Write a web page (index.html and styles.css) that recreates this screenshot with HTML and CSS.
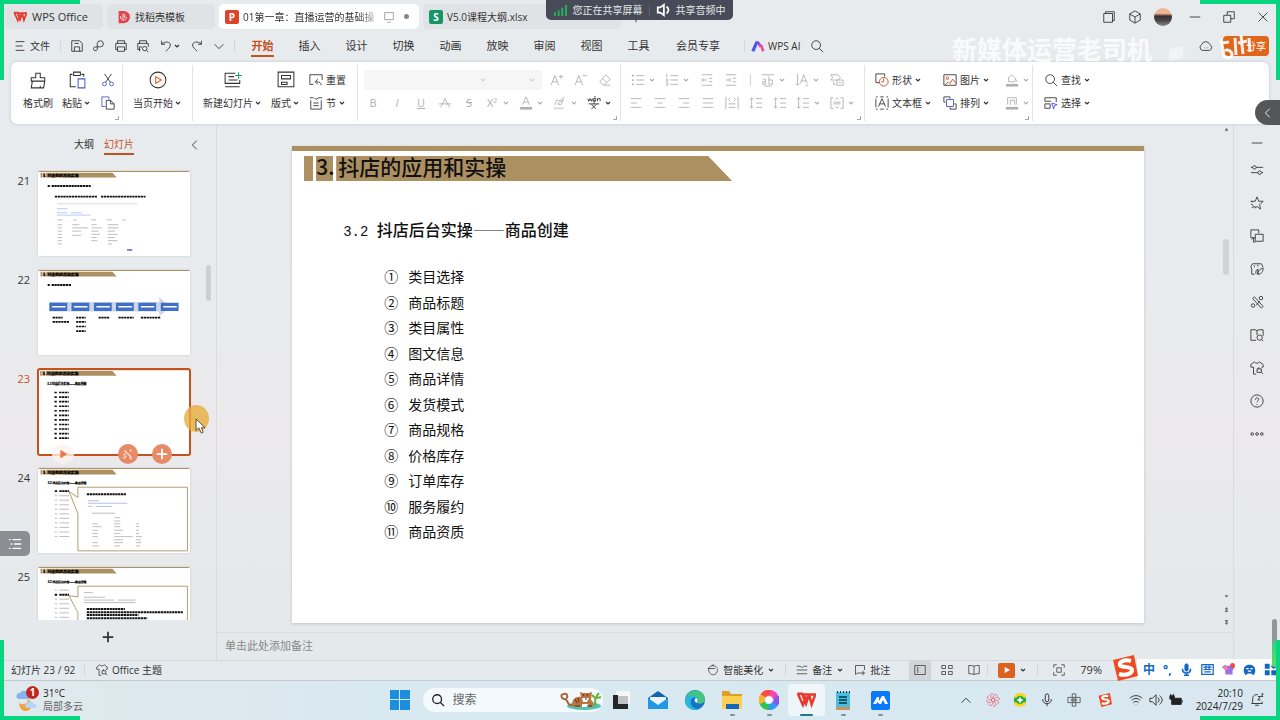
FILE: index.html
```html
<!DOCTYPE html>
<html lang="zh-CN">
<head>
    <meta charset="UTF-8">
    <meta name="viewport" content="width=device-width, initial-scale=1.0">
    <title>WPS Office</title>
    <link rel="stylesheet" href="styles.css">
</head>
<body>
    <svg id="sprite" width="0" height="0">
        <symbol id="caret" viewBox="0 0 8 8"><path d="M2 3l2 2 2-2"/></symbol>
        <symbol id="wps" viewBox="0 0 16 16"><path stroke="#e8392c" stroke-width="2" d="M1 3h4l3 8 2-6M5.500 3.500h5l2 8 3-8h-4M1.500 3l4 9L8 5"/></symbol>
        <symbol id="save" viewBox="0 0 16 16"><path d="M2 2h9l3 3v9H2zM5 14V9h6v5M5 5h5"/></symbol>
        <symbol id="pdf" viewBox="0 0 16 16"><path d="M6 10V5a3.500 3.500 0 1 1 3.500 4H4a2.200 2.200 0 1 0 2 3v-2"/></symbol>
        <symbol id="print" viewBox="0 0 16 16"><path d="M4 5V2h8v3M4 12H2V5h12v7h-2M4 9h8v5H4z"/></symbol>
        <symbol id="preview" viewBox="0 0 16 16"><path d="M4 5V2h8v3M5 12H2V5h12v4M4 14V9h3"/><circle cx="10" cy="11" r="2.500"/><path d="M12 13l2 2"/></symbol>
        <symbol id="undo" viewBox="0 0 16 16"><path d="M3 2v4h4M3 6c4-4 10-3 10 1 0 3-3 4-5 7"/></symbol>
        <symbol id="redo" viewBox="0 0 16 16"><path d="M13 2v4H9M13 6C9 2 3 3 3 7c0 3 3 4 5 7"/></symbol>
        <symbol id="down" viewBox="0 0 16 16"><path d="M3 6l5 5 5-5"/></symbol>
        <symbol id="left" viewBox="0 0 16 16"><path d="M10 3L5 8l5 5"/></symbol>
        <symbol id="up" viewBox="0 0 16 16"><path d="M3 11l5-5 5 5"/></symbol>
        <symbol id="search" viewBox="0 0 16 16"><circle cx="7" cy="7" r="5"/><path d="M10.500 10.500L15 15"/></symbol>
        <symbol id="lines" viewBox="0 0 16 16"><path d="M3 3h10M3 8h8M3 13h10"/></symbol>
        <symbol id="brush" viewBox="0 0 16 16"><path d="M6 6V2h4v4h4v3H2V6zM3 9l-1 6h11l1-6M10 15v-2"/></symbol>
        <symbol id="paste" viewBox="0 0 16 16"><path d="M7 14H2V3h2M12 3h2v2M5 1h6v3H5z"/><path stroke="#4b58c9" d="M9 7h6v8H9z"/></symbol>
        <symbol id="cut" viewBox="0 0 16 16"><path d="M4 1l7 10M12 1L5 11"/><g stroke="#4b58c9"><circle cx="4" cy="12.500" r="2.200"/><circle cx="12" cy="12.500" r="2.200"/></g></symbol>
        <symbol id="copy" viewBox="0 0 16 16"><path stroke="#4b58c9" d="M5 12H1V1h8v3"/><path d="M6 5h5l4 4v6H6zM11 5v4h4"/></symbol>
        <symbol id="playc" viewBox="0 0 16 16"><circle cx="8" cy="8" r="7"/><path stroke="#d2571e" d="M6 5l5 3-5 3z"/></symbol>
        <symbol id="newslide" viewBox="0 0 16 16"><path d="M10 2H1v9h13V8M4 5h5M4 8h8M1 14h13"/><path stroke="#1b9a63" d="M13 1v6M10 4h6"/></symbol>
        <symbol id="layout" viewBox="0 0 16 16"><path d="M1 1h14v13H1zM4 4h8v3H4zM4 10h5v2H4z"/></symbol>
        <symbol id="reset" viewBox="0 0 16 16"><path d="M5 13H1V2h14v6M14 14c0-3-2-4-6-4M10 7l-3 3 3 3"/></symbol>
        <symbol id="section" viewBox="0 0 16 16"><path d="M1 2h4M11 2h4M6 2l2 2 3-2M2 5v10h12V5M5 8h6M5 11h6"/></symbol>
        <symbol id="aplus" viewBox="0 0 16 16"><path d="M1 14L5.500 3 10 14M3 10h5M10 4h5M12.500 2v5"/></symbol>
        <symbol id="aminus" viewBox="0 0 16 16"><path d="M1 14L5.500 3 10 14M3 10h5M10 3h5"/></symbol>
        <symbol id="eraser" viewBox="0 0 16 16"><path d="M9 2l5 5-6 6H5L2 10zM5 6l5 5M7 14h7"/></symbol>
        <symbol id="strike" viewBox="0 0 16 16"><path d="M3 13L8 3l5 10M1 9h14"/></symbol>
        <symbol id="fontcolor" viewBox="0 0 16 16"><path d="M4 10L8 1l4 9M5.500 7h5"/><path stroke-width="3" d="M1 14h14"/></symbol>
        <symbol id="hilite" viewBox="0 0 16 16"><path d="M2 10l2-5h4l5-4M5 9l7-5-3 6z"/><path stroke-width="2.500" stroke="#ddd" d="M1 14h11"/></symbol>
        <symbol id="wen" viewBox="0 0 16 16"><path d="M1 3l1 3 1.500-3L5 6l1-3M7 5h3V3H7v3h3M12 6V3h3v3M8 1h2M2 9h12M8 7v2M5 9l5 6M11 9l-6 6"/></symbol>
        <symbol id="bullets" viewBox="0 0 16 16"><path d="M6 3h9M6 8h9M6 13h9"/><path stroke-width="2" d="M1 3h2M1 8h2M1 13h2"/></symbol>
        <symbol id="numbers" viewBox="0 0 16 16"><path d="M6 3h9M6 8h9M6 13h9M2 1v4M1 7h2v2H1M1 11h2v3H1"/></symbol>
        <symbol id="outdent" viewBox="0 0 16 16"><path d="M2 2h12M10 6h4M10 10h4M2 14h12M8 8H2M4 6L2 8l2 2"/></symbol>
        <symbol id="indent" viewBox="0 0 16 16"><path d="M2 2h12M10 6h4M10 10h4M2 14h12M2 8h6M6 6l2 2-2 2"/></symbol>
        <symbol id="abc" viewBox="0 0 16 16"><path d="M1 2h14M2 7h3v6H2v-3h3M9 4v9h4V8H9M4 15h8"/></symbol>
        <symbol id="vert" viewBox="0 0 16 16"><path d="M3 1v13M1 12l2 2 2-2M6 12l4-10 4 10M7 9h6M12 14h3"/></symbol>
        <symbol id="convert" viewBox="0 0 16 16"><path d="M1 2h8l3 3-3 3H1l2-3zM4 10v3h3M8 8h7v6H8zM10 11h3"/></symbol>
        <symbol id="al" viewBox="0 0 16 16"><path d="M2 3h12M2 8h7M2 13h12"/></symbol>
        <symbol id="ac" viewBox="0 0 16 16"><path d="M2 3h12M5 8h6M2 13h12"/></symbol>
        <symbol id="ar" viewBox="0 0 16 16"><path d="M2 3h12M7 8h7M2 13h12"/></symbol>
        <symbol id="aj" viewBox="0 0 16 16"><path d="M2 3h12M2 8h12M2 13h12"/></symbol>
        <symbol id="dist" viewBox="0 0 16 16"><path d="M1 1v14M15 1v14M4 9h8M4 13h8M6 2L4 4l2 2M10 2l2 2-2 2"/></symbol>
        <symbol id="space" viewBox="0 0 16 16"><path d="M8 3h7M8 8h7M8 13h7M3 2v12M1 4l2-2 2 2M1 12l2 2 2-2"/></symbol>
        <symbol id="vmid" viewBox="0 0 16 16"><path d="M4 2H1v12h3M12 2h3v12h-3M4 7h8M4 9h8M6 4l2-2 2 2M6 12l2 2 2-2"/></symbol>
        <symbol id="shapes" viewBox="0 0 16 16"><path d="M5 11H1V1h10v3"/><g stroke="#c04a28"><circle cx="10" cy="10" r="5"/><path d="M10 6v4H7"/></g></symbol>
        <symbol id="textbox" viewBox="0 0 16 16"><path d="M1 3v10M15 3v10M1 1h2M13 1h2M1 15h2M13 15h2M6 1h4M6 15h4M4 12L8 3l4 9M5 9h6"/></symbol>
        <symbol id="image" viewBox="0 0 16 16"><path d="M1 2h14v12H1z"/><g stroke="#c04a28"><circle cx="5" cy="6" r="1.500"/><path d="M2 14l4-4 2 2 3-5 4 5"/></g></symbol>
        <symbol id="arrange" viewBox="0 0 16 16"><path d="M3 7H1V1h7v2M13 9h2v6H8v-2"/><path stroke="#3f51d6" d="M4 4h8v8H4z"/></symbol>
        <symbol id="fill" viewBox="0 0 16 16"><path d="M4 9V5l4-3 4 4-1 4H4zM12 7l2 3"/><path stroke-width="3" d="M1 14h14"/></symbol>
        <symbol id="frame" viewBox="0 0 16 16"><path d="M3 10V2h10v8M6 10V5h5v5"/><path stroke-width="3" d="M1 14h14"/></symbol>
        <symbol id="select" viewBox="0 0 16 16"><path d="M1 6V2h13v5M1 6h7M1 9v5h6V9z"/><path stroke="#3f51d6" d="M9 8l6 2-3 1-1 4z"/></symbol>
        <symbol id="cube" viewBox="0 0 16 16"><path d="M8 1l6 3.500v7L8 15l-6-3.500v-7zM2 4.500L8 8l6-3.500M8 8v7"/></symbol>
        <symbol id="window" viewBox="0 0 16 16"><path d="M2 4h10v10H2zM4 4V2h10v10h-2"/></symbol>
        <symbol id="restore" viewBox="0 0 16 16"><path d="M2 6h8v8H2zM6 6V2h8v8h-4"/></symbol>
        <symbol id="close" viewBox="0 0 16 16"><path d="M3 3l10 10M13 3L3 13"/></symbol>
        <symbol id="minus" viewBox="0 0 16 16"><path d="M2 8h12"/></symbol>
        <symbol id="plus" viewBox="0 0 16 16"><path d="M8 2v12M2 8h12"/></symbol>
        <symbol id="cloud" viewBox="0 0 16 16"><path d="M4 13a3.500 3.500 0 0 1-1-6.500 5 5 0 0 1 9.500 0A3.500 3.500 0 0 1 12 13zM6 10h.5M8 10h.5M10 10h.5"/></symbol>
        <symbol id="sliders" viewBox="0 0 16 16"><circle cx="5" cy="5" r="2"/><circle cx="11" cy="11" r="2"/><path d="M1 5h2M7 5h8M1 11h8M13 11h2"/></symbol>
        <symbol id="star" viewBox="0 0 16 16"><path d="M3 7L1 6h5l2-5 2 5h5l-4 4 1 5-4-3-3 2M1 9l3 2M2 13l4-1"/></symbol>
        <symbol id="swap" viewBox="0 0 16 16"><path d="M6 10H1V1h9v4M6 6h9v8H6zM6 15H4v-5M2 12l2-2"/></symbol>
        <symbol id="leaf" viewBox="0 0 16 16"><path d="M5 14H2V8L1 5l2-3h10l2 4M7 14c-1-3 0-5 2-6v6M9 14c0-4 2-6 6-7 0 4-2 7-6 7M5 4v2M9 3v2"/></symbol>
        <symbol id="wand" viewBox="0 0 16 16"><path d="M3 4l2-2 10 11-2 2zM7 12l4-5"/><circle cx="12.500" cy="3.500" r="2"/><circle cx="3.500" cy="12" r="2"/></symbol>
        <symbol id="bookfind" viewBox="0 0 16 16"><path d="M7 14H1V2h5l2 1 2-1h5v7M8 3v5"/><circle cx="11" cy="11" r="3"/><path d="M13 13l2 2"/></symbol>
        <symbol id="shirt" viewBox="0 0 16 16"><path d="M7 15H4V7H1V4l4-3c1 2 5 2 6 0l4 3v3h-2M8 9h5v4H8zM10 7v2M13 13l2 2"/></symbol>
        <symbol id="help" viewBox="0 0 16 16"><circle cx="8" cy="8" r="7"/><path d="M6 6.500C6 3.500 10.500 4 10 6.500 9.800 8 8 8 8 9.500M8 11.500v1"/></symbol>
        <symbol id="dots" viewBox="0 0 16 16"><circle cx="2.500" cy="8" r="1.500"/><circle cx="8" cy="8" r="1.500"/><circle cx="13.500" cy="8" r="1.500"/></symbol>
        <symbol id="beauty" viewBox="0 0 16 16"><path d="M2 6c3-5 9-5 12 0M1 6h10M2 6c0 11 12 11 12 1M6 2l3-1"/></symbol>
        <symbol id="note" viewBox="0 0 16 16"><path d="M1 3h5M10 3h5M6 3l2 2 2-2M1 8h14M1 13h14"/></symbol>
        <symbol id="comment" viewBox="0 0 16 16"><path d="M9 12H5l-3 2V2h12v6M12 9v6M9 12h6"/></symbol>
        <symbol id="normal" viewBox="0 0 16 16"><path d="M1 2h14v12H1zM5 4v8"/></symbol>
        <symbol id="grid" viewBox="0 0 16 16"><path d="M1 2h5v4H1zM10 2h5v4h-5zM1 10h5v4H1zM10 10h5v4h-5z"/></symbol>
        <symbol id="book" viewBox="0 0 16 16"><path d="M8 14l-3-1H1V2h4l3 1 3-1h4v11h-4zM8 3v11"/></symbol>
        <symbol id="fit" viewBox="0 0 16 16"><path d="M1 5V1h4M11 1h4v4M15 11v4h-4M5 15H1v-4M5 5h6v6H5z"/></symbol>
        <symbol id="mic" viewBox="0 0 16 16"><path d="M6 3a2 2 0 0 1 4 0v5a2 2 0 0 1-4 0zM3 7c0 7 10 7 10 0M8 12v3"/></symbol>
        <symbol id="wifi" viewBox="0 0 16 16"><path d="M1 6c4-4 10-4 14 0M3 8.500c3-3 7-3 10 0M5 11c2-2 4-2 6 0M8 13v.5"/></symbol>
        <symbol id="sound" viewBox="0 0 16 16"><path d="M1 6h3l4-4v12l-4-4H1zM10 5c2 2 2 4 0 6M12 3c4 3 4 7 0 10"/></symbol>
        <symbol id="sogou" viewBox="0 0 26 26"><path fill="#ee4b23" stroke="none" d="M1 5L22 0l4 21-20 5z"/><path stroke="#fff" stroke-width="4" d="M19 6C12 4 7 7 8 10s12 1 12 5-7 6-13 4"/></symbol>

        <symbol id="slidehead" viewBox="0 0 850 478">
            <path class="gold" d="M0 0h850v5H0zM12 10h9v26h-9zM24 10h16v26H24zM44 10h372l24 26H44z"/>
        </symbol>
        <symbol id="sidelist" viewBox="0 0 850 478">
            <path class="mute" d="M92 130h14m12 0h54M92 156h14m12 0h54M92 181h14m12 0h54M92 207h14m12 0h54M92 232h14m12 0h54M92 258h14m12 0h54M92 283h14m12 0h54M92 309h14m12 0h54M92 334h14m12 0h54M92 360h14m12 0h54M92 385h14m12 0h54"/>
        </symbol>
    </svg>

    <!-- 标签栏 -->
    <header id="tabbar">
        <button class="tab tab_home"><svg class="ic"><use href="#wps"/></svg>WPS Office</button>
        <button class="tab tab_docer"><svg class="ic" viewBox="0 0 16 16"><path fill="#e0444c" stroke="none" d="M3 1h6a7 7 0 0 1 0 14H3z"/><path stroke="#fff" d="M8 4v6M5 7c0 6 7 6 7 1M10 5v4"/></svg>找稻壳模板</button>
        <button class="tab tab_active"><span class="filetype type_p">P</span><span class="tabname">01第一章：直播运营的基础操</span><svg class="ic" viewBox="0 0 16 16"><path stroke="#999" d="M3 3h10v8H3zM6 14h4"/></svg><i class="unsaved"></i></button>
        <button class="tab tab_sheet"><span class="filetype type_s">S</span>V5.0课程大纲.xlsx</button>
        <button class="iconbtn newtab" aria-label="新建"><svg class="ic"><use href="#plus"/></svg></button>
        <div class="winbtns">
            <button class="iconbtn" aria-label="窗口"><svg class="ic"><use href="#window"/></svg></button>
            <button class="iconbtn" aria-label="应用"><svg class="ic"><use href="#cube"/></svg></button>
            <span class="avatar"></span>
            <button class="iconbtn winbtn" aria-label="最小化"><svg class="ic"><use href="#minus"/></svg></button>
            <button class="iconbtn winbtn" aria-label="还原"><svg class="ic"><use href="#restore"/></svg></button>
            <button class="iconbtn winbtn" aria-label="关闭"><svg class="ic"><use href="#close"/></svg></button>
        </div>
    </header>

    <!-- 菜单栏 -->
    <nav id="menubar">
        <button class="filebtn"><svg class="ic"><use href="#lines"/></svg>文件</button>
        <span class="vsplit"></span>
        <div class="quick">
            <button class="iconbtn" aria-label="保存"><svg class="ic"><use href="#save"/></svg></button>
            <button class="iconbtn" aria-label="输出PDF"><svg class="ic"><use href="#pdf"/></svg></button>
            <button class="iconbtn" aria-label="打印"><svg class="ic"><use href="#print"/></svg></button>
            <button class="iconbtn" aria-label="打印预览"><svg class="ic"><use href="#preview"/></svg></button>
            <button class="iconbtn wide" aria-label="撤销"><svg class="ic"><use href="#undo"/></svg><svg class="caret"><use href="#caret"/></svg></button>
            <button class="iconbtn" aria-label="恢复"><svg class="ic"><use href="#redo"/></svg></button>
            <button class="iconbtn" aria-label="更多"><svg class="ic"><use href="#down"/></svg></button>
        </div>
        <span class="vsplit"></span>
        <div class="menus">
            <button class="menu menu_on">开始</button>
            <button class="menu">插入</button>
            <button class="menu">设计</button>
            <button class="menu">切换</button>
            <button class="menu">动画</button>
            <button class="menu">放映</button>
            <button class="menu">审阅</button>
            <button class="menu">视图</button>
            <button class="menu">工具</button>
            <button class="menu menu_vip">会员专享</button>
        </div>
        <span class="vsplit"></span>
        <button class="aibtn"><svg class="ic" viewBox="0 0 16 16"><path stroke="#4a55ee" stroke-width="3.500" d="M2 14L7 3"/><path stroke="#7a4df0" stroke-width="3" d="M7 3l4 5"/><path stroke="#f0489b" stroke-width="3" d="M9 8h3l2 6"/></svg>WPS AI</button>
        <button class="iconbtn" aria-label="搜索"><svg class="ic"><use href="#search"/></svg></button>
        <div class="sharebox">
            <button class="iconbtn" aria-label="云同步"><svg class="ic"><use href="#cloud"/></svg></button>
            <button class="share">分享</button>
        </div>
    </nav>

    <!-- 功能区 -->
    <section id="ribbon">
        <div class="group g_clip">
            <button class="big"><svg class="ic lg"><use href="#brush"/></svg><span>格式刷</span></button>
            <button class="big"><svg class="ic lg"><use href="#paste"/></svg><span>粘贴<svg class="caret"><use href="#caret"/></svg></span></button>
            <div class="rows narrow">
                <button class="tool" aria-label="剪切"><svg class="ic"><use href="#cut"/></svg></button>
                <button class="tool" aria-label="复制"><svg class="ic"><use href="#copy"/></svg></button>
            </div>
            <i class="corner"></i>
        </div>
        <div class="group g_play">
            <button class="big"><svg class="ic lg"><use href="#playc"/></svg><span>当页开始<svg class="caret"><use href="#caret"/></svg></span></button>
        </div>
        <div class="group g_slide">
            <button class="big"><svg class="ic lg"><use href="#newslide"/></svg><span>新建幻灯片<svg class="caret"><use href="#caret"/></svg></span></button>
            <button class="big"><svg class="ic lg"><use href="#layout"/></svg><span>版式<svg class="caret"><use href="#caret"/></svg></span></button>
            <div class="rows">
                <button class="cmd"><svg class="ic"><use href="#reset"/></svg>重置</button>
                <button class="cmd"><svg class="ic"><use href="#section"/></svg>节<svg class="caret"><use href="#caret"/></svg></button>
            </div>
        </div>
        <div class="group g_font">
            <div class="rows off">
                <div class="row">
                    <div class="fontbox">
                        <select class="fontname" aria-label="字体" disabled></select><svg class="caret"><use href="#caret"/></svg>
                        <select class="fontsize" aria-label="字号" disabled></select><svg class="caret"><use href="#caret"/></svg>
                    </div>
                    <button class="tool" aria-label="增大字号"><svg class="ic"><use href="#aplus"/></svg></button>
                    <button class="tool" aria-label="减小字号"><svg class="ic"><use href="#aminus"/></svg></button>
                    <button class="tool" aria-label="清除格式"><svg class="ic"><use href="#eraser"/></svg></button>
                </div>
                <div class="row">
                    <button class="tool">B</button>
                    <button class="tool"><em>I</em></button>
                    <button class="tool"><u>U</u></button>
                    <button class="tool" aria-label="删除线"><svg class="ic"><use href="#strike"/></svg></button>
                    <button class="tool"><s>S</s></button>
                    <button class="tool drop"><span class="sup">X²</span><svg class="caret"><use href="#caret"/></svg></button>
                    <button class="tool drop" aria-label="字体颜色"><svg class="ic"><use href="#fontcolor"/></svg><svg class="caret"><use href="#caret"/></svg></button>
                    <button class="tool drop" aria-label="突出显示"><svg class="ic"><use href="#hilite"/></svg><svg class="caret"><use href="#caret"/></svg></button>
                    <button class="tool drop dark" aria-label="拼音指南"><svg class="ic"><use href="#wen"/></svg><svg class="caret"><use href="#caret"/></svg></button>
                </div>
            </div>
            <i class="corner"></i>
        </div>
        <div class="group g_para">
            <div class="rows off">
                <div class="row">
                    <button class="tool drop" aria-label="项目符号"><svg class="ic"><use href="#bullets"/></svg><svg class="caret"><use href="#caret"/></svg></button>
                    <button class="tool drop" aria-label="编号"><svg class="ic"><use href="#numbers"/></svg><svg class="caret"><use href="#caret"/></svg></button>
                    <button class="tool" aria-label="减少缩进"><svg class="ic"><use href="#outdent"/></svg></button>
                    <button class="tool" aria-label="增加缩进"><svg class="ic"><use href="#indent"/></svg></button>
                    <span class="vsplit insplit"></span>
                    <button class="tool drop" aria-label="对齐文本"><svg class="ic"><use href="#abc"/></svg><svg class="caret"><use href="#caret"/></svg></button>
                    <button class="tool drop" aria-label="文字方向"><svg class="ic"><use href="#vert"/></svg><svg class="caret"><use href="#caret"/></svg></button>
                    <button class="tool" aria-label="转智能图形"><svg class="ic"><use href="#convert"/></svg></button>
                </div>
                <div class="row">
                    <button class="tool" aria-label="左对齐"><svg class="ic"><use href="#al"/></svg></button>
                    <button class="tool" aria-label="居中"><svg class="ic"><use href="#ac"/></svg></button>
                    <button class="tool" aria-label="右对齐"><svg class="ic"><use href="#ar"/></svg></button>
                    <button class="tool" aria-label="两端对齐"><svg class="ic"><use href="#aj"/></svg></button>
                    <button class="tool" aria-label="分散对齐"><svg class="ic"><use href="#dist"/></svg></button>
                    <button class="tool" aria-label="增大段距"><svg class="ic"><use href="#space"/></svg></button>
                    <button class="tool" aria-label="减小段距"><svg class="ic"><use href="#space"/></svg></button>
                    <button class="tool drop" aria-label="行距"><svg class="ic"><use href="#space"/></svg><svg class="caret"><use href="#caret"/></svg></button>
                    <button class="tool drop" aria-label="垂直对齐"><svg class="ic"><use href="#vmid"/></svg><svg class="caret"><use href="#caret"/></svg></button>
                </div>
            </div>
            <i class="corner"></i>
        </div>
        <div class="group g_draw">
            <div class="rows">
                <button class="cmd"><svg class="ic"><use href="#shapes"/></svg>形状<svg class="caret"><use href="#caret"/></svg></button>
                <button class="cmd"><svg class="ic"><use href="#textbox"/></svg>文本框<svg class="caret"><use href="#caret"/></svg></button>
            </div>
            <div class="rows">
                <button class="cmd"><svg class="ic"><use href="#image"/></svg>图片<svg class="caret"><use href="#caret"/></svg></button>
                <button class="cmd"><svg class="ic"><use href="#arrange"/></svg>排列<svg class="caret"><use href="#caret"/></svg></button>
            </div>
            <div class="rows off">
                <button class="tool drop" aria-label="填充"><svg class="ic"><use href="#fill"/></svg><svg class="caret"><use href="#caret"/></svg></button>
                <button class="tool drop" aria-label="轮廓"><svg class="ic"><use href="#frame"/></svg><svg class="caret"><use href="#caret"/></svg></button>
            </div>
            <i class="corner"></i>
        </div>
        <div class="group g_find">
            <div class="rows">
                <button class="cmd"><svg class="ic"><use href="#search"/></svg>查找<svg class="caret"><use href="#caret"/></svg></button>
                <button class="cmd"><svg class="ic"><use href="#select"/></svg>选择<svg class="caret"><use href="#caret"/></svg></button>
            </div>
        </div>
    </section>

    <main id="work">
        <!-- 缩略图 -->
        <aside id="panel">
            <div class="panelhead">
                <button class="ptab">大纲</button>
                <button class="ptab ptab_on">幻灯片</button>
                <button class="iconbtn fold" aria-label="收起"><svg class="ic"><use href="#left"/></svg></button>
            </div>
            <ol id="thumbs">
                <li><span class="num">21</span>
                    <svg class="thumb" viewBox="0 0 850 478">
                        <use href="#slidehead"/>
                        <text class="thumbtitle" x="26" y="31">3. 抖店的应用和实操</text>
                        <path class="ink" d="M52 84h12m10 0h220M92 144h238m22 0h250"/>
                        <path stroke="#e4e6ea" stroke-width="8" d="M104 184h452"/>
                        <path stroke="#a9c8f0" stroke-width="5" d="M104 212h60M104 235h60m20 0h60M104 248h190"/>
                        <path class="mute" d="M108 275h28m60 0h20m80 0h28m60 0h28m60 0h20M108 302h24M108 320h24M108 338h24M108 356h24M108 374h24M108 392h24M108 410h24M190 302h40M190 320h90M190 338h50M190 362h50M298 302h30M298 320h60M298 338h40M298 356h48M298 374h30M298 392h34M390 302h60M390 320h60M390 338h40M390 356h54M390 374h40M390 392h54M390 410h24"/>
                        <path stroke="#3e63b8" stroke-width="8" d="M498 444h30"/>
                    </svg>
                </li>
                <li><span class="num">22</span>
                    <svg class="thumb" viewBox="0 0 850 478">
                        <use href="#slidehead"/>
                        <text class="thumbtitle" x="26" y="31">3. 抖店的应用和实操</text>
                        <path class="ink" d="M52 84h12m10 0h110"/>
                        <path fill="#ccd6ea" d="M60 180h620v-28l60 55-60 55v-28H60z"/>
                        <path stroke="#3f6fc6" stroke-width="46" d="M62 207h100M186 207h100M312 207h100M436 207h100M562 207h100M688 207h100"/>
                        <path stroke="#fff" stroke-width="9" d="M76 207h76M200 207h76M326 207h76M450 207h76M576 207h76M702 207h76"/>
                        <path class="ink thin" d="M80 268h56M80 292h92M212 268h54M212 292h54M212 318h54M212 344h54M338 268h60M450 268h86M576 268h110"/>
                    </svg>
                </li>
                <li class="current"><span class="num">23</span>
                    <svg class="thumb" viewBox="0 0 850 478">
                        <use href="#slidehead"/>
                        <text class="thumbtitle" x="26" y="31">3. 抖店的应用和实操</text>
                        <text class="thumbsub" x="52" y="90">3.2 抖店后台实操——商品创建</text>
                        <path class="ink thin" d="M92 130h14m12 0h54M92 156h14m12 0h54M92 181h14m12 0h54M92 207h14m12 0h54M92 232h14m12 0h54M92 258h14m12 0h54M92 283h14m12 0h54M92 309h14m12 0h54M92 334h14m12 0h54M92 360h14m12 0h54M92 385h14m12 0h54"/>
                    </svg>
                    <div class="thumbtools">
                        <button class="tplay" aria-label="播放"><svg class="ic" viewBox="0 0 16 16"><path fill="#e87a45" stroke="none" d="M5 3l8 5-8 5z"/></svg></button>
                        <button class="tround" aria-label="美化"><svg class="ic" viewBox="0 0 16 16"><path stroke="#fbd3bd" stroke-width="2" d="M4 4l8 8M12 3l-2 2M6 10l-3 3M10 12l2 2M3 8l2 1"/></svg></button>
                        <button class="tround" aria-label="新建"><svg class="ic" viewBox="0 0 16 16"><path stroke="#fff" stroke-width="2" d="M8 2v12M2 8h12"/></svg></button>
                    </div>
                </li>
                <li><span class="num">24</span>
                    <svg class="thumb" viewBox="0 0 850 478">
                        <use href="#slidehead"/>
                        <text class="thumbtitle" x="26" y="31">3. 抖店的应用和实操</text>
                        <text class="thumbsub" x="52" y="90">3.2 抖店后台实操——商品创建</text>
                        <use href="#sidelist"/>
                        <path class="ink" d="M92 130h14m12 0h54"/>
                        <path class="callout" d="M222 108h616v358H222V256L172 132l50 34z"/>
                        <path class="ink" d="M272 148h220"/>
                        <path stroke="#86a8dc" stroke-width="4" d="M280 198h220M280 216h24m20 0h90"/>
                        <path class="mute" d="M280 184h60M300 254h130M426 280h34M426 298h34M304 314h30M426 314h34m88 0h18M304 330h50M426 330h34m88 0h18M304 350h30M426 350h50m72 0h18M304 368h30M426 368h34m88 0h18M304 386h30M426 386h104m18 0h34M426 404h50m72 0h30M304 420h30M426 420h50m72 0h30M304 438h36M426 438h34m88 0h24"/>
                    </svg>
                </li>
                <li><span class="num">25</span>
                    <svg class="thumb" viewBox="0 0 850 478">
                        <use href="#slidehead"/>
                        <text class="thumbtitle" x="26" y="31">3. 抖店的应用和实操</text>
                        <text class="thumbsub" x="52" y="90">3.2 抖店后台实操——商品创建</text>
                        <use href="#sidelist"/>
                        <path class="ink" d="M92 156h14m12 0h54"/>
                        <path class="callout" d="M222 108h616v358H222V256L172 162l50 6z"/>
                        <path class="mute" d="M256 144h50M256 170h120M256 186h170m20 0h100M256 200h290"/>
                        <path class="ink" d="M272 236h214M272 254h540M272 270h290M272 288h340"/>
                    </svg>
                </li>
            </ol>
            <button class="iconbtn addslide" aria-label="新建幻灯片"><svg class="ic"><use href="#plus"/></svg></button>
            <i class="panelscroll"></i>
            <i class="halo"></i>
            <svg class="cursor" viewBox="0 0 12 18"><path d="M1 1v13l3-3 3 6 2-1-2-5h4z"/></svg>
            <button class="outline" aria-label="目录"><svg class="ic" viewBox="0 0 16 16"><path stroke="#fff" stroke-width="1.500" d="M1 3h2M5 3h10M3 8h2M7 8h8M1 13h2M5 13h10"/></svg></button>
        </aside>

        <!-- 编辑区 -->
        <section id="editor">
            <div id="stage">
                <div class="canvas">
                    <article id="slide">
                        <h1><i></i><span class="no">3.</span><span class="title">抖店的应用和实操</span></h1>
                        <h2><span class="half">3.2 </span>抖店后台实操<span class="dash">——</span>商品创建</h2>
                        <ul>
                            <li><span>①</span>类目选择</li>
                            <li><span>②</span>商品标题</li>
                            <li><span>③</span>类目属性</li>
                            <li><span>④</span>图文信息</li>
                            <li><span>⑤</span>商品详情</li>
                            <li><span>⑥</span>发货模式</li>
                            <li><span>⑦</span>商品规格</li>
                            <li><span>⑧</span>价格库存</li>
                            <li><span>⑨</span>订单库存</li>
                            <li><span>⑩</span>服务履约</li>
                            <li><span>⑪</span>商品资质</li>
                        </ul>
                    </article>
                </div>
                <div class="vscroll">
                    <svg viewBox="0 0 8 8"><path d="M1 6l3-5 3 5z"/></svg>
                    <i></i>
                    <svg viewBox="0 0 8 8"><path d="M1 2l3 4 3-4z"/></svg>
                    <svg viewBox="0 0 8 8"><path d="M1 4l3-4 3 4zM1 8l3-4 3 4z"/></svg>
                    <svg viewBox="0 0 8 8"><path d="M1 0l3 4 3-4zM1 4l3 4 3-4z"/></svg>
                </div>
            </div>
            <input id="notes" type="text" placeholder="单击此处添加备注" aria-label="备注">
        </section>

        <aside id="sidebar">
            <button class="iconbtn" aria-label="收起"><svg class="ic"><use href="#minus"/></svg></button>
            <button class="iconbtn" aria-label="属性"><svg class="ic"><use href="#sliders"/></svg></button>
            <button class="iconbtn" aria-label="动画"><svg class="ic"><use href="#star"/></svg></button>
            <button class="iconbtn" aria-label="切换"><svg class="ic"><use href="#swap"/></svg></button>
            <button class="iconbtn" aria-label="素材"><svg class="ic"><use href="#leaf"/></svg></button>
            <button class="iconbtn" aria-label="工具"><svg class="ic"><use href="#wand"/></svg></button>
            <button class="iconbtn" aria-label="资料"><svg class="ic"><use href="#bookfind"/></svg></button>
            <button class="iconbtn" aria-label="换肤"><svg class="ic"><use href="#shirt"/></svg></button>
            <button class="iconbtn" aria-label="帮助"><svg class="ic"><use href="#help"/></svg></button>
            <button class="iconbtn" aria-label="更多"><svg class="ic"><use href="#dots"/></svg></button>
        </aside>
    </main>

    <!-- 状态栏 -->
    <footer id="status">
        <span class="page">幻灯片 23 / 92</span>
        <span class="vsplit"></span>
        <button class="sbtn theme"><svg class="ic"><use href="#shirt"/></svg>Office 主题</button>
        <div class="statusright">
            <button class="sbtn"><svg class="ic"><use href="#beauty"/></svg>智能美化<svg class="caret"><use href="#caret"/></svg></button>
            <span class="vsplit"></span>
            <button class="sbtn"><svg class="ic"><use href="#note"/></svg>备注<svg class="caret"><use href="#caret"/></svg></button>
            <button class="sbtn"><svg class="ic"><use href="#comment"/></svg>批注</button>
            <div class="views">
                <button class="iconbtn view_on" aria-label="普通视图"><svg class="ic"><use href="#normal"/></svg></button>
                <button class="iconbtn" aria-label="幻灯片浏览"><svg class="ic"><use href="#grid"/></svg></button>
                <button class="iconbtn" aria-label="阅读视图"><svg class="ic"><use href="#book"/></svg></button>
            </div>
            <span class="vsplit"></span>
            <button class="playbtn" aria-label="放映"><svg class="ic" viewBox="0 0 16 16"><path fill="#fff" stroke="none" d="M5 4l7 4-7 4z"/></svg></button>
            <svg class="caret"><use href="#caret"/></svg>
            <span class="vsplit"></span>
            <button class="iconbtn" aria-label="适应窗口"><svg class="ic"><use href="#fit"/></svg></button>
            <span class="zoom">79%</span>
        </div>
    </footer>

    <!-- 任务栏 -->
    <footer id="taskbar">
        <div class="weather">
            <svg class="wicon" viewBox="0 0 24 24"><path fill="#f2a03c" d="M3 15c5 3 9 0 9-4 7 5 3 13-3 12-3 0-6-4-6-8z"/><path fill="#86b2ee" d="M3 11a3 3 0 0 1 1-6 5 5 0 0 1 9 2v4z"/><path fill="#b9d3f6" d="M10 20a3 3 0 0 1 1-5 4 4 0 0 1 7 1 2 2 0 0 1 1 4z"/></svg>
            <b class="badge">1</b>
            <div><p>31°C</p><p class="sky">局部多云</p></div>
        </div>
        <div class="apps">
            <button class="app start" aria-label="开始"><svg viewBox="0 0 20 20"><path fill="#1b8fdd" d="M0 0h9v9H0zM10 0h10v9H10zM0 10h9v10H0zM10 10h10v10H10z"/></svg></button>
            <label class="searchbox">
                <svg class="ic"><use href="#search"/></svg>
                <input type="text" placeholder="搜索" aria-label="搜索">
                <svg class="tiger" viewBox="0 0 42 22"><ellipse cx="24" cy="17" rx="17" ry="4" fill="#4fc3b5"/><path fill="none" stroke="#a6673a" stroke-width="2" d="M14 15C6 19 9 9 4 10c-3-1-4-5 0-5 4-1 4 4 2 4"/><path fill="#bd7340" d="M12 16c0-6 4-9 9-8l-1-5 3 1h6l3-1-1 8c3 2 3 6 1 7H14z"/><path fill="#fff" d="M22 9h7l-2 4h-4zM22 15h6v3h-6z"/><path fill="none" stroke="#5b3423" d="M15 10l2 4M18 9l1 4M23 5l1 2M28 5l-1 2M24 8h0M28 8h0M25 10h2M15 17h5M27 17h5"/><path fill="none" stroke="#68b236" stroke-width="2" d="M35 17c0-6 0-9 4-13M36 10l-4-4M37 9l4-1"/></svg>
            </label>
            <button class="app" aria-label="任务视图"><svg viewBox="0 0 20 20"><path fill="#f7f7f7" d="M5 1h14v13H5z"/><path fill="#24272c" d="M2 5h5v9h10v5H2z"/><path fill="#bfc2c7" d="M7 6h10v8H7z"/></svg></button>
            <button class="app" aria-label="邮件"><svg viewBox="0 0 20 20"><path fill="#1264ad" d="M0 8l10-7 10 7v11H0z"/><path fill="#eaf6fd" d="M2 7h16v8H2z"/><path fill="#2297e4" d="M0 8l10 7 10-7v11H0z"/></svg></button>
            <button class="app" aria-label="Edge"><svg viewBox="0 0 20 20"><circle cx="10" cy="10" r="10" fill="#1672c4"/><path fill="#43c483" d="M1 8C3-2 19-2 20 9c0 4-5 6-8 4 2-2 1-6-3-6-3 0-6 0-8 1z"/><path fill="#2bb6dc" d="M0 11C1 5 8 3 12 8c-5-2-7 2-6 6 1 4 6 6 10 4C9 23 0 18 0 11z"/><path fill="#e6f4fa" d="M12 13c-3-1-3-4-1-5 2 0 2 3 1 5z"/></svg></button>
            <button class="app run" aria-label="资源管理器"><svg viewBox="0 0 20 20"><path fill="#dea127" d="M0 1h7l2 3h11v5H0z"/><path fill="#fbcf52" d="M0 6h20v13H0z"/><path fill="#1767b8" d="M4 14h13v5H4z"/></svg></button>
            <button class="app run" aria-label="浏览器"><svg viewBox="0 0 20 20"><g fill="none" stroke-width="6"><path stroke="#fa4b42" d="M4 6a7 7 0 0 1 8-3"/><path stroke="#f447b5" d="M11 3a7 7 0 0 1 6 5"/><path stroke="#8558ec" d="M17 7a7 7 0 0 1-2 8"/><path stroke="#329bf5" d="M16 14a7 7 0 0 1-7 3"/><path stroke="#31c255" d="M10 17a7 7 0 0 1-7-5"/><path stroke="#f9b529" d="M3 13a7 7 0 0 1 1-7"/></g><circle cx="10" cy="10" r="3" fill="#fff"/></svg></button>
            <button class="app run app_on" aria-label="WPS"><svg viewBox="0 0 16 16"><use href="#wps"/></svg></button>
            <button class="app run" aria-label="记事本"><svg viewBox="0 0 20 20"><path fill="#c79562" d="M3 17h14v3H3z"/><path fill="#49bddc" d="M3 2h14v15H3z"/><path fill="none" stroke="#17566e" stroke-width="2" d="M6 7h8M6 10h8M6 13h8"/><path fill="none" stroke="#235" stroke-width="2" stroke-dasharray="1 2" d="M4 2h13"/></svg></button>
            <button class="app run" aria-label="腾讯会议"><svg viewBox="0 0 20 20"><rect width="19" height="19" x="1" y="1" rx="2" fill="#0879fa"/><path fill="#fff" d="M3 14l4-7h2v4l3-5h2l4 8h-3l-2-4-2 4H9l-1-2-2 2z"/></svg></button>
        </div>
        <div class="tray">
            <svg class="ic"><use href="#up"/></svg>
            <svg class="ic" viewBox="0 0 16 16"><g stroke="#e95a68"><circle cx="8" cy="8" r="2"/><path d="M8 6c0-5 4-5 5-3M10 8c5 0 5 4 3 5M8 10c0 5-4 5-5 3M6 8C1 8 1 4 3 3M10 6c3-3 6 0 5 2M6 10c-3 3-6 0-5-2M6 6c-2-4 0-6 2-5M10 10c2 4 0 6-2 5"/></g></svg>
            <svg class="ic" viewBox="0 0 16 16"><circle cx="8" cy="8" r="7" fill="#27ab3e" stroke="none"/><path stroke="#f7d61c" stroke-width="3" d="M2 5c4-5 10-4 12 0M2 11c3 4 9 4 12 0"/><circle cx="8" cy="8" r="4" fill="#27ab3e" stroke="none"/><path stroke="#fff" stroke-width="2" d="M8 5v6M5 8h6"/></svg>
            <svg class="ic"><use href="#mic"/></svg>
            <svg class="ic" viewBox="0 0 16 16"><path stroke="#555" d="M6 1h4v14H6zM1 5h14v6H1zM4 8h8M8 5v6"/></svg>
            <svg class="ic traysogou"><use href="#sogou"/></svg>
            <svg class="ic"><use href="#wifi"/></svg>
            <svg class="ic"><use href="#sound"/></svg>
            <svg class="ic" viewBox="0 0 16 16"><path fill="#222" d="M3 6h11v7H3zM15 8v3"/><path fill="#222" d="M1 3h5v4H1zM2 1v2M5 1v2"/></svg>
            <div class="clock"><p>20:10</p><p>2024/7/29</p></div>
            <svg class="ic bell" viewBox="0 0 16 16"><path d="M9 2c-4-1-6 2-6 5v3l-1 2h12v-2M6 14h4M9 4h3L9 8h3M13 1h2l-2 3h2"/></svg>
        </div>
    </footer>

    <!-- 悬浮层 -->
    <div id="sharing">
        <svg class="signal" viewBox="0 0 14 12"><path fill="#22b65b" d="M0 8h2v4H0zM4 6h2v6H4zM8 3h2v9H8zM12 0h2v12h-2z"/></svg>
        <span>您正在共享屏幕</span>
        <i></i>
        <svg class="ic" viewBox="0 0 16 16"><path stroke="#fff" stroke-width="2" d="M2 5h3l4-3v12l-4-3H2zM12 4c3 2 3 6 0 8"/></svg>
        <span>共享音频中</span>
    </div>
    <div id="watermark">新媒体运营老司机</div>
    <svg id="bili" viewBox="0 0 90 34"><path fill="none" stroke="#fff" stroke-width="3" d="M52 8l3 17c6 4 10 0 7-4s-6-1-6-1M66 7l1 17M72 4l2 19M80 7l1 14M69 12l9-2M53 12l7-1"/><path fill="#f2f4f6" d="M0 18l14-3v12l-14 3z"/></svg>
    <button id="drawer" aria-label="展开"><svg class="ic"><use href="#left"/></svg></button>
    <div id="ime">
        <svg class="imelogo"><use href="#sogou"/></svg>
        <span>中</span>
        <span class="punct">°,</span>
        <svg class="ic" viewBox="0 0 16 16"><path fill="#1267c5" d="M6 3a2 2 0 0 1 4 0v5a2 2 0 0 1-4 0z"/><path stroke-width="2" d="M3 7c0 7 10 7 10 0M8 12v3M5 15h6"/></svg>
        <svg class="ic" viewBox="0 0 16 16"><path stroke-width="1.500" d="M1 2h14v12H1zM3 5h10M3 8h10M4 11h8M6 3v6M10 3v6"/></svg>
        <svg class="ic" viewBox="0 0 16 16"><path fill="#9b72ea" stroke="none" d="M0 5l4-3c2 2 6 2 8 0l4 3-3 4v5H4V9z"/><path fill="#ee80b0" stroke="none" d="M0 5l4-3 4 6-4 1z"/><circle cx="13" cy="3" r="3" fill="#f24c38" stroke="none"/></svg>
        <svg class="ic" viewBox="0 0 16 16"><path fill="#1267c5" stroke="none" d="M1 8c0-8 14-8 14 0v3l-2 4-3-2H6l-3 2-2-4z"/><path stroke="#fff" stroke-width="1.500" d="M4 7h3M9 7h3M6 10h4"/></svg>
        <svg class="ic" viewBox="0 0 16 16"><path fill="#1267c5" stroke="none" d="M1 1h6v6H1zM1 9h6v6H1zM9 9h6v6H9z"/><circle cx="12" cy="4" r="3" fill="#1267c5" stroke="none"/></svg>
    </div>
    <i id="edgebar"></i>
    <i class="mark mark_tl"></i>
    <i class="mark mark_tr"></i>
    <i class="mark mark_bl"></i>
    <i class="mark mark_br"></i>
</body>
</html>
```
FILE: styles.css
```css
*{
    box-sizing: border-box;
}
body{
    margin: 0;
    height: 100vh;
    overflow: hidden;
    display: flex;
    flex-direction: column;
    position: relative;
    background: linear-gradient(#e8ebee 0, #e8ebee 35%, #ebe9eb 60%, #e4e9eb 90%);
    color: #333;
    font-family: "Open Sans", "Noto Sans CJK SC", sans-serif;
    font-size: 10px;
    line-height: 14px;
}
button,input,select{
    font: inherit;
    color: inherit;
    background: none;
    border: 0;
    padding: 0;
    margin: 0;
    outline: none;
}
button{
    display: flex;
    align-items: center;
    justify-content: center;
    white-space: nowrap;
    cursor: pointer;
}
p,h1,h2,ul,ol{
    margin: 0;
    padding: 0;
    list-style: none;
}
#sprite{
    display: none;
}
.ic{
    width: 14px;
    height: 14px;
    flex-shrink: 0;
    fill: none;
    stroke: currentColor;
    stroke-width: 1;
}
.caret{
    width: 8px;
    height: 8px;
    flex-shrink: 0;
    fill: none;
    stroke: currentColor;
    stroke-width: 1.200;
}
.vsplit{
    width: 1px;
    height: 12px;
    flex-shrink: 0;
    background-color: #d3d6d9;
}

/* 标签栏 */
#tabbar{
    height: 33px;
    flex-shrink: 0;
    display: flex;
    align-items: center;
    gap: 4px;
    padding: 0 2px 0 5px;
}
.tab{
    height: 25px;
    justify-content: flex-start;
    border-radius: 5px;
    background-color: #e0e3e6;
    padding: 0 8px;
    gap: 5px;
}
.tab_home{
    width: 98px;
    font-size: 11px;
}
.tab_docer{
    width: 108px;
    padding-left: 9px;
}
.tab_active{
    width: 200px;
    background-color: #fff;
    padding: 0 6px;
    gap: 4px;
}
.tab_sheet{
    width: 198px;
    padding-left: 6px;
    gap: 4px;
}
.tabname{
    flex: 1;
    text-align: left;
    -webkit-mask-image: linear-gradient(90deg, #000 85%, #0003);
    mask-image: linear-gradient(90deg, #000 85%, #0003);
}
.filetype{
    width: 14px;
    height: 14px;
    flex-shrink: 0;
    border-radius: 2px;
    color: #fff;
    font-weight: bold;
    text-align: center;
}
.type_p{
    background-color: #dd4427;
}
.type_s{
    background-color: #169665;
}
.unsaved{
    width: 5px;
    height: 5px;
    margin: 0 4px;
    border-radius: 50%;
    background-color: #888;
}
.iconbtn{
    width: 22px;
    height: 22px;
    flex-shrink: 0;
}
.winbtns{
    margin-left: auto;
    display: flex;
    align-items: center;
    gap: 4px;
}
.avatar{
    width: 18px;
    height: 18px;
    margin: 0 4px;
    border-radius: 50%;
    background: linear-gradient(#efb593 30%, #33302f 45%, #4b4645 70%, #8e8784);
}
.winbtn{
    width: 30px;
}

/* 菜单栏 */
#menubar{
    height: 29px;
    flex-shrink: 0;
    display: flex;
    align-items: center;
    padding: 0 11px 4px 13px;
}
.filebtn{
    width: 47px;
    justify-content: flex-start;
    gap: 3px;
}
.quick{
    display: flex;
    padding: 0 4px 0 5px;
}
.quick .wide{
    width: 32px;
}
.menus{
    display: flex;
    padding: 0 10px 0 4px;
}
.menu{
    width: 47px;
    height: 23px;
    padding-top: 2px;
    font-size: 11px;
    border-bottom: 2px solid transparent;
}
.menu_on{
    width: 23px;
    margin: 0 12px;
    color: #c4521f;
    font-weight: bold;
    border-color: #c4521f;
}
.menu_vip{
    width: 72px;
}
.aibtn{
    padding: 0 6px;
    gap: 3px;
}
.sharebox{
    margin-left: auto;
    display: flex;
    align-items: center;
    gap: 6px;
}
.share{
    width: 46px;
    height: 20px;
    padding-right: 3px;
    justify-content: flex-end;
    border-radius: 4px;
    background-color: #e0661c;
    color: #fff;
}

/* 功能区 */
#ribbon{
    height: 62px;
    flex-shrink: 0;
    margin: 0 11px;
    display: flex;
    align-items: center;
    background-color: #fff;
    border-radius: 6px;
    box-shadow: 0 0 3px #bbbfc4;
}
.group{
    position: relative;
    height: 56px;
    flex-shrink: 0;
    display: flex;
    align-items: center;
    padding-bottom: 3px;
    border-right: 1px solid #e2e4e6;
}
.g_clip{
    width: 112px;
    padding-left: 12px;
    gap: 9px;
}
.g_play{
    width: 70px;
    justify-content: center;
}
.g_slide{
    width: 165px;
    padding-left: 10px;
    gap: 9px;
}
.g_font{
    width: 263px;
    padding-left: 3px;
}
.g_para{
    width: 244px;
    padding-left: 3px;
}
.g_draw{
    width: 168px;
    padding-left: 10px;
    gap: 11px;
}
.g_find{
    border: 0;
    padding-left: 11px;
}
.big{
    height: 45px;
    flex-direction: column;
    justify-content: space-between;
}
.big span{
    height: 22px;
    display: flex;
    align-items: center;
    gap: 1px;
}
.lg{
    width: 18px;
    height: 18px;
    margin-top: 2px;
    stroke-width: 0.900;
}
.rows{
    display: flex;
    flex-direction: column;
    gap: 1px;
}
.row{
    display: flex;
}
.tool{
    width: 24px;
    height: 22px;
    font-size: 11px;
}
.narrow .tool{
    width: 16px;
}
.drop{
    width: 34px;
    padding-left: 4px;
    justify-content: flex-start;
}
.drop .ic,.drop .sup{
    width: 14px;
}
.drop .caret{
    margin-left: 3px;
}
.off{
    color: #adafb1;
}
.off .dark{
    color: #333;
}
.cmd{
    height: 22px;
    justify-content: flex-start;
    gap: 3px;
}
.cmd .caret{
    margin-left: -1px;
}
.fontbox{
    width: 178px;
    height: 20px;
    margin: 1px 3px;
    display: flex;
    align-items: center;
    background-color: #f6f6f6;
    border-radius: 3px;
    color: #d0d2d4;
}
.fontname{
    width: 115px;
    appearance: none;
}
.fontsize{
    width: 41px;
    appearance: none;
}
.insplit{
    margin: 5px 6px 5px 7px;
}
.g_para .row:first-child{
    padding-left: 3px;
}
.corner{
    position: absolute;
    right: 3px;
    bottom: 1px;
    width: 4px;
    height: 4px;
    border: solid #a5a8aa;
    border-width: 0 1px 1px 0;
}

/* 主体 */
#work{
    flex: 1;
    min-height: 0;
    display: flex;
}
#panel{
    width: 217px;
    flex-shrink: 0;
    position: relative;
    display: flex;
    flex-direction: column;
    align-items: center;
    padding-bottom: 7px;
    border-right: 1px solid #d9dcdf;
}
.panelhead{
    width: 100%;
    height: 46px;
    flex-shrink: 0;
    display: flex;
    align-items: center;
    padding: 0 10px 5px 74px;
    gap: 10px;
}
.ptab{
    height: 20px;
    border-bottom: 2px solid transparent;
}
.ptab_on{
    color: #c4521f;
    border-color: #c4521f;
}
.fold{
    margin-left: auto;
}
#thumbs{
    width: 100%;
    flex: 1;
    min-height: 0;
    overflow: hidden;
}
#thumbs li{
    position: relative;
    height: 99px;
    padding: 1px 26px 0 0;
    display: flex;
    justify-content: flex-end;
    align-items: flex-start;
}
.num{
    margin: 3px 8px 0 0;
    font-size: 11px;
}
.thumb{
    width: 152px;
    height: 85px;
    background-color: #fff;
    box-shadow: 0 0 2px #c4c7ca;
    fill: none;
}
.current .num{
    color: #c4521f;
}
.current .thumb{
    height: 86px;
    outline: 2px solid #c4521f;
    outline-offset: -1px;
    border-radius: 2px;
}
.gold{
    fill: #ac9062;
}
.thumbtitle,.thumbsub{
    fill: #000;
    stroke: #000;
    font-weight: bold;
    font-size: 22px;
}
.thumbsub{
    font-size: 16px;
}
.ink{
    stroke: #111;
    stroke-width: 11;
    stroke-dasharray: 13 3;
}
.thin{
    stroke-width: 9;
}
.mute{
    stroke: #b5b5b8;
    stroke-width: 5;
}
.callout{
    fill: #fff;
    stroke: #ac9062;
    stroke-width: 5;
}
.thumbtools{
    position: absolute;
    left: 52px;
    top: 76px;
    display: flex;
    align-items: center;
}
.tplay{
    width: 22px;
    height: 20px;
    margin-right: 44px;
    background-color: #fbf3eecc;
    border-radius: 50%;
}
.tround{
    width: 20px;
    height: 20px;
    margin-right: 14px;
    border-radius: 50%;
    background-color: #e88a68;
}
.addslide{
    height: 33px;
}
.addslide .ic{
    stroke-width: 2;
}
.panelscroll{
    position: absolute;
    right: 5px;
    top: 141px;
    width: 5px;
    height: 36px;
    border-radius: 3px;
    background-color: #cdd0d3;
}
.halo{
    position: absolute;
    left: 184px;
    top: 281px;
    width: 25px;
    height: 27px;
    border-radius: 50%;
    background-color: #e9ac3ccc;
}
.cursor{
    position: absolute;
    left: 195px;
    top: 294px;
    width: 11px;
    height: 16px;
    fill: #fff;
    stroke: #4b3a2c;
}
.outline{
    position: absolute;
    left: 0;
    top: 407px;
    width: 30px;
    height: 25px;
    border-radius: 0 5px 5px 0;
    background-color: #8b8f93;
}
#editor{
    flex: 1;
    min-width: 0;
    display: flex;
    flex-direction: column;
}
#stage{
    flex: 1;
    min-height: 0;
    display: flex;
}
.canvas{
    flex: 1;
    display: flex;
    justify-content: center;
    padding: 22px 0 9px;
}
#slide{
    width: 85%;
    background-color: #fff;
    border-top: 5px solid #ac9062;
    box-shadow: 0 1px 3px #c1c4c7;
    padding: 5px 12px;
    color: #111;
    font-family: "Noto Sans CJK SC", sans-serif;
}
#slide h1{
    display: flex;
    gap: 3px;
    height: 25px;
    font-size: 21px;
    line-height: 20px;
    font-weight: 500;
}
#slide h1 i{
    width: 9px;
    background-color: #ac9062;
}
.no{
    width: 17px;
    background-color: #ac9062;
}
.title{
    width: 396px;
    padding-left: 2px;
    background-color: #ac9062;
    clip-path: polygon(0 0, 372px 0, 100% 100%, 0 100%);
}
#slide h2{
    margin: 36px 0 0 39px;
    font-size: 16px;
    line-height: 24px;
    font-weight: 500;
}
.half{
    font-family: "Liberation Mono", monospace;
    font-size: 14px;
    font-weight: normal;
    white-space: pre;
}
.dash{
    font-weight: 300;
}
#slide ul{
    height: 275px;
    margin: 22px 0 0 80px;
    display: flex;
    flex-direction: column;
    justify-content: space-between;
    font-size: 14px;
    line-height: 20px;
}
#slide li{
    display: flex;
    gap: 10px;
}
.vscroll{
    width: 14px;
    display: flex;
    flex-direction: column;
    align-items: center;
    padding: 3px 0 7px;
}
.vscroll svg{
    width: 5px;
    height: 5px;
    margin-bottom: 8px;
    fill: #666;
}
.vscroll svg:last-child{
    margin-bottom: 0;
}
.vscroll i{
    width: 6px;
    height: 36px;
    margin: 99px 0 auto;
    border-radius: 3px;
    background-color: #d0d2d4;
}
#notes{
    height: 28px;
    padding: 0 8px 3px;
    border-top: 1px solid #d9dcdf;
    font-size: 11px;
}
#notes::placeholder{
    color: #888;
    opacity: 1;
}
#sidebar{
    width: 47px;
    flex-shrink: 0;
    display: flex;
    flex-direction: column;
    align-items: center;
    gap: 11px;
    padding-top: 11px;
    border-left: 1px solid #d9dcdf;
}
#sidebar .iconbtn:first-child{
    height: 16px;
    margin-bottom: -3px;
}

/* 状态栏 */
#status{
    height: 21px;
    flex-shrink: 0;
    display: flex;
    align-items: center;
    padding: 0 0 1px 11px;
    border-top: 1px solid #d5d8db;
    border-bottom: 1px solid #c4c9ce;
    background-color: #e5eaee;
}
#status .ic{
    width: 12px;
    height: 12px;
}
.page{
    width: 73px;
    white-space: nowrap;
}
.sbtn{
    gap: 4px;
}
.theme{
    padding-left: 11px;
}
.statusright{
    margin-left: auto;
    padding-right: 178px;
    display: flex;
    align-items: center;
    gap: 10px;
}
.views{
    display: flex;
    gap: 5px;
    margin: 0 -8px 0 9px;
}
.view_on{
    background-color: #d2d5d8;
}
.statusright .iconbtn{
    height: 19px;
}
.playbtn{
    width: 17px;
    height: 15px;
    margin-right: -6px;
    border-radius: 2px;
    background-color: #dc6220;
}
.zoom{
    font-size: 11px;
}

/* 任务栏 */
#taskbar{
    height: 39px;
    flex-shrink: 0;
    display: grid;
    grid-template-columns: 1fr auto 1fr;
    align-items: center;
    padding-bottom: 1px;
    background: linear-gradient(90deg, #e0e9ed, #d8e9f1 35%, #d9e8f0);
    color: #222;
}
.weather{
    position: relative;
    display: flex;
    align-items: center;
    gap: 3px;
    padding-left: 16px;
    line-height: 13px;
}
.wicon{
    width: 24px;
    height: 24px;
}
.sky{
    color: #666;
}
.badge{
    position: absolute;
    left: 26px;
    top: -1px;
    width: 13px;
    height: 13px;
    border-radius: 50%;
    background-color: #c0281f;
    color: #fff;
    text-align: center;
}
.apps{
    display: flex;
    align-items: center;
    padding-left: 8px;
}
.app{
    position: relative;
    width: 37px;
    height: 32px;
}
.app svg{
    width: 20px;
    height: 20px;
    fill: none;
}
.start{
    width: 20px;
    margin-right: 13px;
}
.app_on{
    background-color: #eef6fa;
    border-radius: 4px;
}
.run::after{
    content: '';
    position: absolute;
    bottom: 0;
    width: 5px;
    height: 2px;
    border-radius: 1px;
    background-color: #83909a;
}
.app_on::after{
    width: 13px;
    background-color: #1b7c8c;
}
.searchbox{
    width: 180px;
    height: 24px;
    display: flex;
    align-items: center;
    gap: 8px;
    padding: 0 1px 0 8px;
    border-radius: 12px;
    background-color: #f3f9fc;
    font-size: 12px;
}
.searchbox input{
    flex: 1;
    min-width: 0;
}
.searchbox input::placeholder{
    color: #666;
    opacity: 1;
}
.searchbox .ic{
    stroke-width: 1.500;
}
.tiger{
    width: 42px;
    height: 22px;
}
.tray{
    display: flex;
    align-items: center;
    justify-content: flex-end;
    gap: 13px;
    padding-right: 16px;
}
.tray .traysogou{
    margin: 0 4px;
}
.tray .traysogou + .ic,.tray .traysogou + .ic + .ic{
    margin-right: -7px;
}
.clock{
    text-align: right;
    line-height: 13px;
}
.tray .bell{
    margin-left: -6px;
}

/* 悬浮层 */
#sharing{
    position: absolute;
    top: 0;
    left: 546px;
    width: 187px;
    height: 20px;
    display: flex;
    align-items: center;
    justify-content: center;
    gap: 6px;
    border-radius: 0 0 5px 5px;
    background-color: #474b57;
    color: #e6e7ea;
    white-space: nowrap;
}
#sharing i{
    width: 1px;
    height: 12px;
    background-color: #5d616c;
}
.signal{
    width: 13px;
    height: 11px;
}
#watermark{
    position: absolute;
    right: 128px;
    top: 32px;
    color: #fffc;
    font-size: 25px;
    line-height: 34px;
    font-weight: bold;
}
#bili{
    position: absolute;
    right: 20px;
    top: 31px;
    width: 92px;
    height: 34px;
    opacity: 0.9;
}
#drawer{
    position: absolute;
    right: 0;
    top: 100px;
    width: 25px;
    height: 25px;
    border-radius: 13px 0 0 13px;
    background-color: #545658;
    color: #fff;
}
#edgebar{
    position: absolute;
    right: 3px;
    top: 619px;
    width: 5px;
    height: 48px;
    border-radius: 3px;
    background: linear-gradient(#949698 45%, #35d07f 50%, #5ddf6c);
}
#ime{
    position: absolute;
    right: 0;
    bottom: 40px;
    width: 143px;
    height: 21px;
    display: flex;
    align-items: center;
    justify-content: space-between;
    padding: 0 3px 0 6px;
    background-color: #fff;
    color: #1267c5;
    font-weight: bold;
    font-size: 12px;
}
#ime .ic{
    width: 13px;
    height: 13px;
}
.imelogo{
    position: absolute;
    left: -25px;
    bottom: -1px;
    width: 26px;
    height: 26px;
    fill: none;
}
.mark{
    position: absolute;
    width: 80px;
    height: 80px;
    border: 0 solid #08d57f;
    pointer-events: none;
}
.mark_tl{
    top: 0;left: 0;
    border-width: 4px 0 0 4px;
}
.mark_tr{
    top: 0;right: 0;
    border-width: 4px 4px 0 0;
}
.mark_bl{
    bottom: 0;left: 0;
    border-width: 0 0 4px 4px;
}
.mark_br{
    bottom: 0;right: 0;
    border-width: 0 4px 4px 0;
}
```
